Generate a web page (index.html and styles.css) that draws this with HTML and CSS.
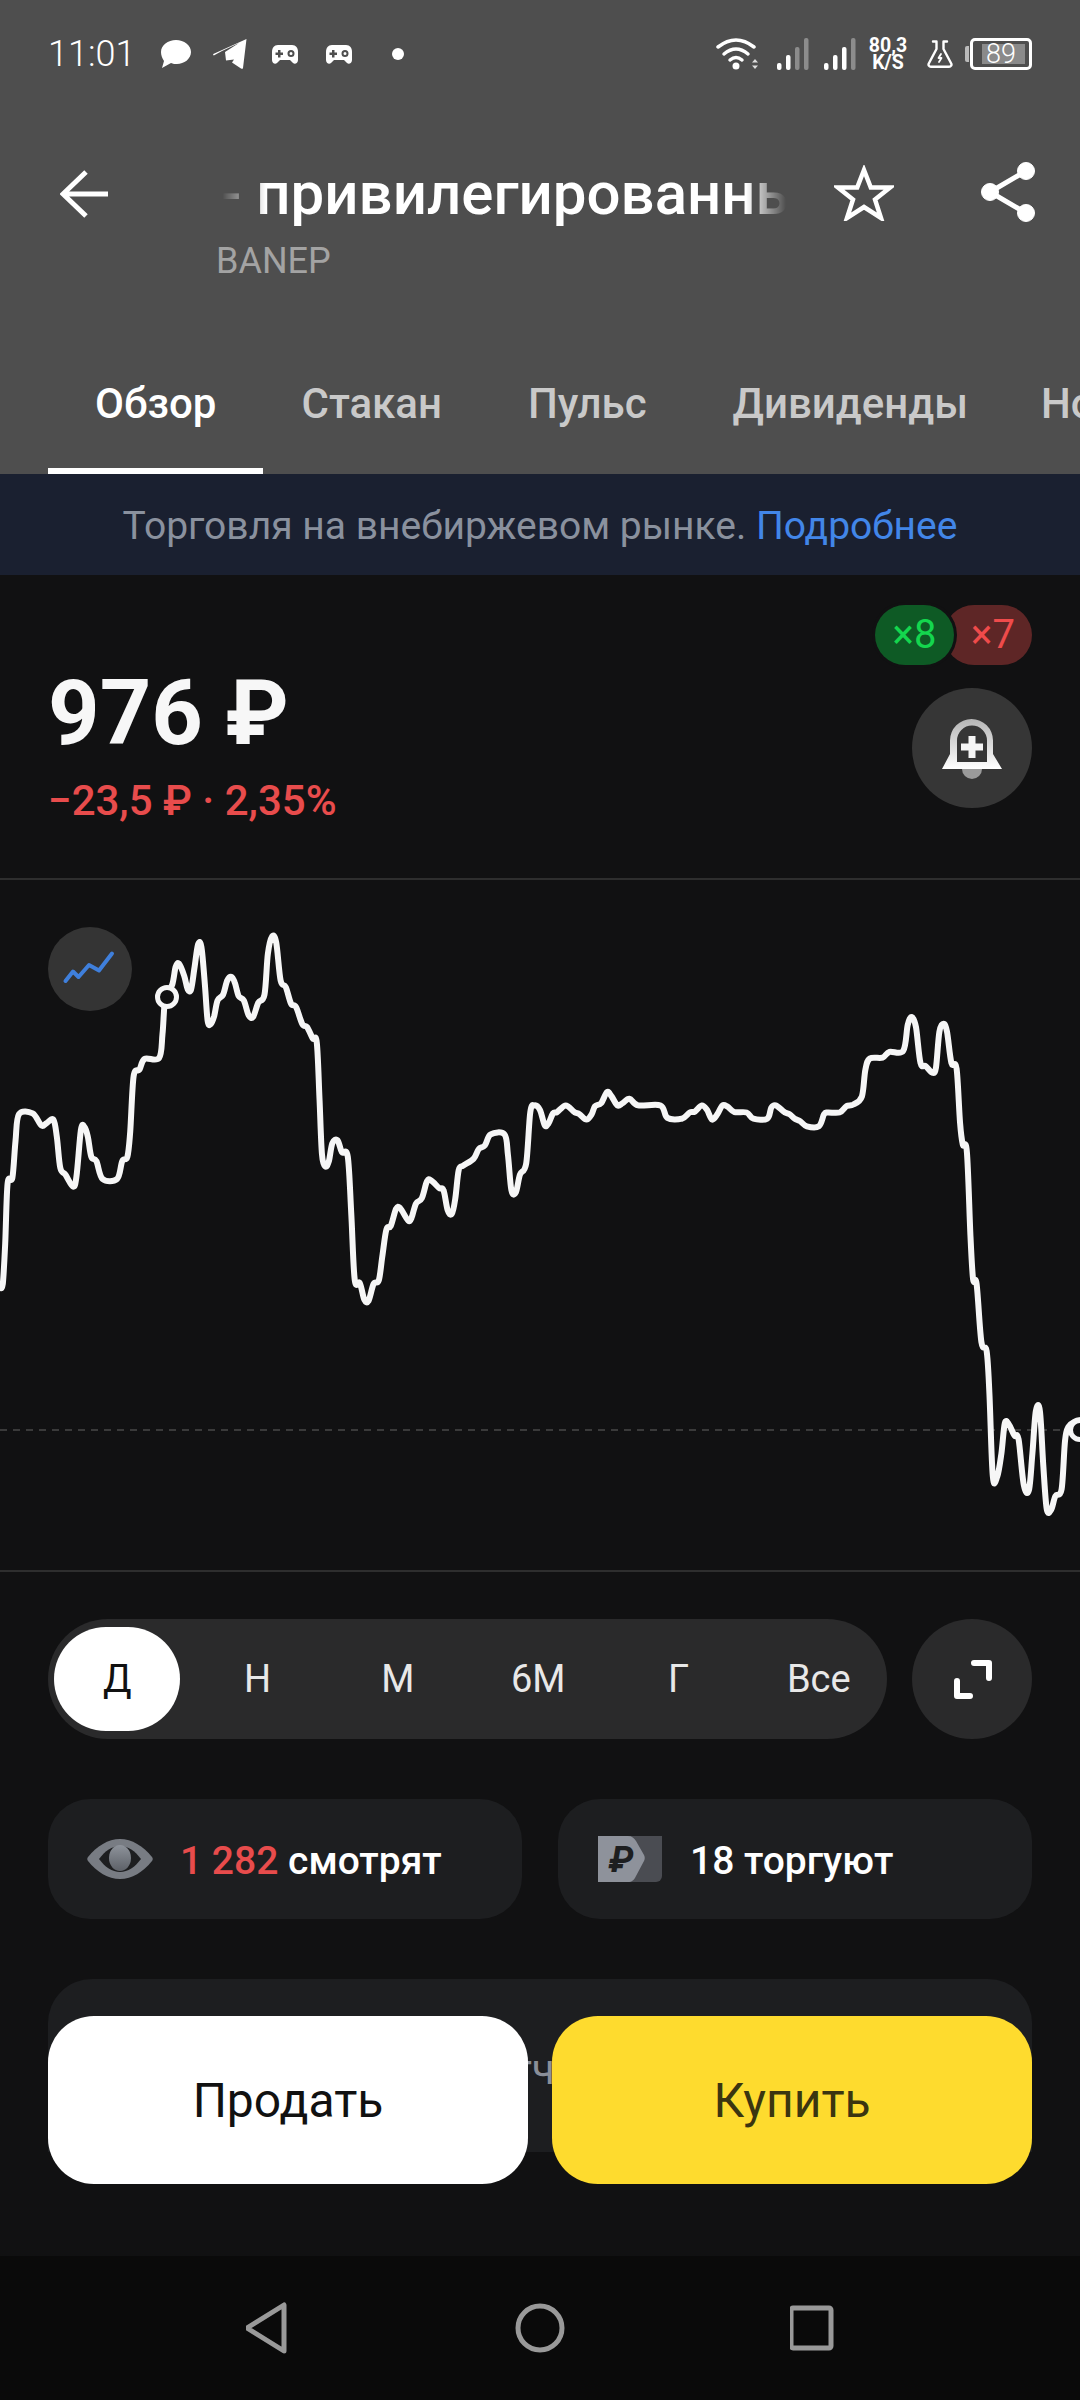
FILE: index.html
```html
<!DOCTYPE html>
<html lang="ru">
<head>
  <meta charset="UTF-8" />
  <meta name="viewport" content="width=device-width, initial-scale=1.0"/>
  <title>BANEP</title>
  <link rel="stylesheet" href="styles.css">
</head>
<body>
<div class="page">

  <header class="top">
    <div class="status">
      <div class="status-left">
        <span class="time">11:01</span>
        <svg class="ic-chat" width="30" height="28" viewBox="0 0 30 28"><path fill="#fff" d="M15 0c8 0 15 5 15 12s-7 12-14 12c-2 0-4 0-6-1l-9 5 2-7C1 18 0 15 0 12 0 5 7 0 15 0z"/></svg>
        <svg class="ic-tele" width="34" height="30" viewBox="0 0 34 30"><path fill="#fff" d="M33.5 0 30 29c-.2 1-1 1-2 .6l-9-6 2-3-8 1L12 13 26 4 9 12 .8 16.500c-.8-.6-1-1.200 0-1.700z"/></svg>
        <svg class="ic-pad" width="26" height="19" viewBox="0 0 26 19"><use href="#gamepad"/></svg>
        <svg class="ic-pad2" width="26" height="19" viewBox="0 0 26 19"><use href="#gamepad"/></svg>
        <span class="status-dot"></span>
      </div>
      <div class="status-right">
        <svg class="ic-wifi" width="44" height="36" viewBox="0 0 44 36" fill="none" stroke="#fff" stroke-width="3.5" stroke-linecap="round">
          <path d="M2 11Q20-3 38 11"/><path d="M8 18Q20 8 32 18"/><path d="M14 24Q20 19 26 24"/>
          <circle cx="20" cy="30" r="3.500" fill="#fff" stroke="none"/>
          <path d="M39 23l3 3.500h-6zM39 33l3-3.500h-6z" fill="#ddd" stroke="none"/>
        </svg>
        <svg class="ic-signal" width="32" height="32" viewBox="0 0 32 32">
          <rect x="0" y="25" width="4.500" height="7" rx="2" fill="#fff"/><rect x="9" y="17" width="4.500" height="15" rx="2" fill="#fff"/>
          <rect x="18" y="9" width="4.500" height="23" rx="2" fill="#8c8c8c"/><rect x="27" y="0" width="4.500" height="32" rx="2" fill="#8c8c8c"/>
        </svg>
        <svg class="ic-signal2" width="32" height="32" viewBox="0 0 32 32">
          <rect x="0" y="25" width="4.500" height="7" rx="2" fill="#fff"/><rect x="9" y="17" width="4.500" height="15" rx="2" fill="#fff"/>
          <rect x="18" y="9" width="4.500" height="23" rx="2" fill="#fff"/><rect x="27" y="0" width="4.500" height="32" rx="2" fill="#8c8c8c"/>
        </svg>
        <div class="speed">80,3<br>K/S</div>
        <svg class="ic-flask" width="26" height="28" viewBox="0 0 26 28" fill="none" stroke="#fff" stroke-width="2.400" stroke-linejoin="round" stroke-linecap="round">
          <path d="M6 1.500h3.500V9L1.800 23.500C1 25 2 26.800 4 26.800h18c2 0 3-1.800 2.200-3.300L16.500 9V1.500H20"/>
          <path d="M14 14l-2.500 4h3l-2.500 4" stroke-width="1.800"/>
        </svg>
        <div class="battery-tip"></div>
        <div class="battery"><span class="battery-level">89</span></div>
      </div>
    </div>

    <div class="titlebar">
      <svg class="ic-back" width="48" height="48" viewBox="0 0 48 48" fill="none" stroke="#fff" stroke-width="5"><path d="M48 24H3M26 2 3 24l23 22"/></svg>
      <div class="title-wrap">
        <div class="title">- привилегированные акции</div>
        <div class="ticker">BANEP</div>
      </div>
      <svg class="ic-star" width="60" height="56" viewBox="0 0 60 56" fill="none" stroke="#fff" stroke-width="4.500"><path d="M30 5l6.800 17.500H56L41 34.500 47 53 30 42 13 53l6-18.500L4 22.500h19.200z"/></svg>
      <svg class="ic-share" width="56" height="62" viewBox="0 0 56 62" fill="#fff" stroke="#fff"><path d="M45 10 9 31l36 21" fill="none" stroke-width="5"/><circle cx="45" cy="10" r="8.500"/><circle cx="9" cy="31" r="8.500"/><circle cx="45" cy="52" r="8.500"/></svg>
    </div>

    <nav class="tabs">
      <div class="tab tab-active">Обзор</div>
      <div class="tab">Стакан</div>
      <div class="tab">Пульс</div>
      <div class="tab">Дивиденды</div>
      <div class="tab tab-last">Новости</div>
    </nav>
  </header>

  <div class="banner">Торговля на внебиржевом рынке. <span class="banner-link">Подробнее</span></div>

  <section class="price-row">
    <div class="price-info">
      <div class="price">976 ₽</div>
      <div class="change">−23,5 ₽ · 2,35%</div>
    </div>
    <div class="price-side">
      <div class="badges">
        <span class="badge badge-green">×8</span>
        <span class="badge badge-red">×7</span>
      </div>
      <button class="round-btn bell-btn">
        <svg width="120" height="120" viewBox="0 0 120 120">
          <defs><linearGradient id="bellGrad" x1="0" y1="0" x2="0" y2="1"><stop offset="0" stop-color="#b5b5b5"/><stop offset="1" stop-color="#fff"/></linearGradient></defs>
          <path d="M50 81a10 10 0 0 0 20 0z" fill="#9a9a9a"/>
          <path fill="url(#bellGrad)" fill-rule="evenodd" d="M30 81l8-15V52.500a21.500 21.500 0 0 1 43 0V66l9 15zM45 74h30V52.500a15 15 0 0 0-30 0z"/>
          <path fill="#f5f5f5" d="M56.500 48h7v7.500H71v7h-7.500V70h-7v-7.500H49v-7h7.500z"/>
        </svg>
      </button>
    </div>
  </section>

  <section class="chart">
    <div class="chart-mode">
      <svg width="84" height="84" viewBox="0 0 84 84" fill="none" stroke="#3f7fdb" stroke-width="4" stroke-linecap="round" stroke-linejoin="round"><path d="M17.500 54 25 44.500l5.500 5.500 10.500-12 10 5.500L64 26.500"/></svg>
    </div>
    <svg class="chart-svg" width="1080" height="690" viewBox="0 0 1080 690">
      <line class="chart-base" x1="0" y1="550" x2="1080" y2="550"/>
      <path id="chartLine" class="chart-line"/>
      <circle class="chart-dot" cx="167" cy="117" r="9.500"/>
      <circle class="chart-dot" cx="1080" cy="550" r="9.500"/>
    </svg>
  </section>

  <section class="periods">
    <div class="period-pill">
      <div class="period period-active">Д</div>
      <div class="period">Н</div>
      <div class="period">М</div>
      <div class="period">6М</div>
      <div class="period">Г</div>
      <div class="period">Все</div>
    </div>
    <button class="round-btn expand-btn">
      <svg width="120" height="120" viewBox="0 0 120 120" fill="none" stroke="#fff" stroke-width="6" stroke-linejoin="round" stroke-linecap="round"><path d="M62 44h15v15M58 77H45V62"/></svg>
    </button>
  </section>

  <section class="stats">
    <div class="stat stat-watch">
      <svg width="66" height="40" viewBox="0 0 66 40">
        <defs><linearGradient id="irisGrad" x1="0" y1="0" x2="0" y2="1"><stop offset="0" stop-color="#8e939b"/><stop offset="1" stop-color="#5d6168"/></linearGradient></defs>
        <path fill="#787c83" d="M1 18C10 7 21 0 33 0s23 7 32 18c1 1.300 1 2.700 0 4-9 11-20 18-32 18S10 33 1 22c-1-1.300-1-2.700 0-4z"/>
        <path fill="#1d1e20" d="M12 20c6-8 13-13 21-13s15 5 21 13c-6 8-13 13-21 13s-15-5-21-13z"/>
        <ellipse cx="33" cy="19" rx="11" ry="13" fill="url(#irisGrad)"/>
      </svg>
      <span class="stat-text"><span class="stat-red">1 282</span> смотрят</span>
    </div>
    <div class="stat stat-trade">
      <svg width="64" height="46" viewBox="0 0 64 46">
        <path fill="#4a4c52" d="M20 0h44v40a6 6 0 0 1-6 6H20z"/>
        <path fill="#8e929b" d="M0 0h30c4 0 6 2 8 5l8 14c1 2 1 4 0 6l-8 15c-2 4-4 6-8 6H0z"/>
        <text class="rub-mark" x="23" y="36">₽</text>
      </svg>
      <span class="stat-text">18 торгуют</span>
    </div>
  </section>

  <section class="info-card"><span class="info-text">Отчёт</span></section>

  <div class="footer-space"></div>

  <div class="trade-buttons">
    <button class="trade-btn trade-sell">Продать</button>
    <button class="trade-btn trade-buy">Купить</button>
  </div>

  <nav class="navbar">
    <svg width="44" height="52" viewBox="0 0 44 52" fill="none" stroke="#999" stroke-width="5" stroke-linejoin="round"><path d="M38 3v46L1 26z"/></svg>
    <svg width="52" height="52" viewBox="0 0 52 52" fill="none" stroke="#999" stroke-width="5"><circle cx="26" cy="26" r="22"/></svg>
    <svg width="46" height="46" viewBox="0 0 46 46" fill="none" stroke="#999" stroke-width="5" stroke-linejoin="round"><rect x="1" y="3" width="40" height="40" rx="2"/></svg>
  </nav>

</div>

<svg width="0" height="0" class="defs">
  <symbol id="gamepad" viewBox="0 0 26 19">
    <path fill="#fff" fill-rule="evenodd" d="M6 0h14c4 0 6 3 6 7v8c0 3-3 5-5 3l-3-3H8l-3 3c-2 2-5 0-5-3V7c0-4 2-7 6-7zM6 5v2.500H3.500v2.500H6v2.500h2.500V10H11V7.500H8.500V5zM19 5a3.500 3.500 0 1 0 0 7 3.500 3.500 0 0 0 0-7zm0 2a1.500 1.500 0 1 1 0 3 1.500 1.500 0 0 1 0-3z"/>
  </symbol>
</svg>

<script src="chart.js"></script>
</body>
</html>
```

FILE: styles.css
```css
* {
  box-sizing: border-box;
}

body {
  margin: 0;
  font-family: Roboto, "Noto Sans", sans-serif;
  background: #111112;
  color: #fff;
}

button {
  font-family: inherit;
  border: none;
  padding: 0;
}

.defs {
  position: absolute;
}

.page {
  position: relative;
  display: flex;
  flex-direction: column;
  width: 1080px;
  height: 2400px;
  overflow: hidden;
}

/* header */
.top {
  height: 474px;
  background: #4e4e4e;
  display: flex;
  flex-direction: column;
}

.status {
  height: 108px;
  padding: 0 48px;
  display: flex;
  justify-content: space-between;
  align-items: center;
}

.status-left, .status-right {
  display: flex;
  align-items: center;
}

.time {
  font-size: 36px;
  font-weight: 300;
  width: 82px;
  white-space: nowrap;
}

.ic-chat { margin-left: 31px; }
.ic-tele { margin-left: 22px; }
.ic-pad { margin-left: 25px; }
.ic-pad2 { margin-left: 28px; }

.status-dot {
  width: 12px;
  height: 12px;
  margin-left: 40px;
  border-radius: 50%;
  background: #fff;
}

.ic-signal { margin-left: 17px; }
.ic-signal2 { margin-left: 15px; }

.speed {
  width: 40px;
  margin-left: 12px;
  font-size: 19.5px;
  font-weight: 700;
  line-height: 17px;
  text-align: center;
}

.ic-flask { margin-left: 19px; }

.battery-tip {
  width: 4px;
  height: 16px;
  margin-left: 12px;
  margin-right: 1px;
  border-radius: 2px 0 0 2px;
  background: #bbb;
}

.battery {
  width: 62px;
  height: 32px;
  padding: 3px 4px 3px 9px;
  border: 3px solid #fff;
  border-radius: 5px;
}

.battery-level {
  display: block;
  height: 20px;
  padding-left: 4px;
  background: #8a8a8a;
  font-size: 27px;
  font-weight: 300;
  line-height: 20px;
}

.titlebar {
  display: flex;
  align-items: flex-start;
  padding: 62px 0 0 60px;
}

.ic-back {
  flex: none;
}

.title-wrap {
  width: 570px;
  margin-left: 108px;
  margin-top: -10px;
}

.title {
  overflow: hidden;
  padding-left: 5px;
  font-size: 60px;
  font-weight: 500;
  line-height: 68px;
  white-space: nowrap;
  -webkit-mask-image: linear-gradient(90deg, transparent 6px, #000 50px, #000 530px, transparent 570px);
  mask-image: linear-gradient(90deg, transparent 6px, #000 50px, #000 530px, transparent 570px);
}

.ticker {
  margin-top: 13px;
  color: #a3a3a3;
  font-size: 36px;
  line-height: 40px;
}

.ic-star {
  flex: none;
  margin-left: 48px;
  margin-top: -5px;
}

.ic-share {
  flex: none;
  margin-left: 87px;
  margin-top: -9px;
}

.tabs {
  margin-top: auto;
  padding-left: 48px;
  display: flex;
}

.tab {
  flex: none;
  padding: 0 43px 40px;
  border-bottom: 6px solid transparent;
  color: #c9c9c9;
  font-size: 42px;
  font-weight: 500;
  line-height: 48px;
}

.tab-active {
  padding: 0 47px 40px;
  margin-right: -5px;
  border-bottom-color: #fff;
  color: #fff;
}

.tab-last {
  padding-left: 30px;
}

.banner {
  height: 101px;
  background: #1a2030;
  color: #8a919e;
  font-size: 39px;
  line-height: 105px;
  text-align: center;
  white-space: nowrap;
}

.banner-link {
  color: #4286e8;
}

/* price */
.price-row {
  height: 305px;
  padding: 30px 48px 0;
  border-bottom: 2px solid #2e2e2e;
  display: flex;
  justify-content: space-between;
}

.price-info {
  padding-top: 57px;
}

.price {
  color: #f7f7f7;
  font-size: 90px;
  font-weight: 700;
  line-height: 104px;
}

.change {
  margin-top: 13px;
  color: #e84c4c;
  font-size: 42px;
  font-weight: 500;
  line-height: 44px;
}

.price-side {
  display: flex;
  flex-direction: column;
  align-items: flex-end;
  gap: 23px;
}

.badges {
  display: flex;
}

.badge {
  height: 60px;
  border-radius: 30px;
  font-size: 40px;
  line-height: 60px;
  text-align: center;
}

.badge-green {
  position: relative;
  width: 79px;
  background: #0e5a25;
  box-shadow: 0 0 0 3px #111112;
  color: #14d64e;
}

.badge-red {
  width: 88px;
  margin-left: -10px;
  padding-left: 10px;
  background: #5e2626;
  color: #ef4b4b;
}

.round-btn {
  display: block;
  width: 120px;
  height: 120px;
  border-radius: 50%;
  flex: none;
}

.bell-btn {
  background: #363636;
}

/* chart */
.chart {
  position: relative;
  height: 692px;
  border-bottom: 2px solid #2e2e2e;
}

.chart-mode {
  position: absolute;
  left: 48px;
  top: 47px;
  width: 84px;
  height: 84px;
  border-radius: 50%;
  background: #343434;
}

.chart-svg {
  display: block;
}

.chart-base {
  stroke: #3a3a3a;
  stroke-width: 2;
  stroke-dasharray: 7 6;
}

.chart-line {
  fill: none;
  stroke: #f6f6f6;
  stroke-width: 6;
  stroke-linejoin: round;
  stroke-linecap: round;
}

.chart-dot {
  fill: #111112;
  stroke: #f6f6f6;
  stroke-width: 5;
}

/* period selector */
.periods {
  margin-top: 47px;
  padding: 0 48px;
  display: flex;
  justify-content: space-between;
}

.period-pill {
  width: 839px;
  height: 120px;
  padding: 8px 5px 8px 6px;
  border-radius: 60px;
  background: #2a2a2b;
  display: flex;
  gap: 14px;
}

.period {
  flex: 1;
  border-radius: 52px;
  color: #e8e8e8;
  font-size: 38px;
  line-height: 104px;
  text-align: center;
}

.period-active {
  background: #fff;
  color: #111;
}

.expand-btn {
  background: #2a2a2b;
}

/* watchers */
.stats {
  margin-top: 60px;
  padding: 0 48px;
  display: flex;
  justify-content: space-between;
}

.stat {
  width: 474px;
  height: 120px;
  border-radius: 42px;
  background: #1d1e20;
  display: flex;
  align-items: center;
  font-size: 39px;
  font-weight: 500;
}

.stat-watch {
  padding-left: 39px;
  gap: 27px;
}

.stat-trade {
  padding-left: 40px;
  gap: 28px;
}

.stat-text {
  padding-top: 4px;
}

.stat-red {
  color: #e84c4c;
}

.rub-mark {
  fill: #1d1e20;
  font-size: 36px;
  font-weight: 700;
  font-style: italic;
  text-anchor: middle;
}

/* card under the trade buttons */
.info-card {
  height: 173px;
  margin: 60px 48px 0;
  padding-top: 67px;
  border-radius: 44px 44px 0 0;
  background: #1d1e20;
  color: #8a8f98;
  font-size: 42px;
  line-height: 48px;
  text-align: center;
}

.footer-space {
  flex: 1;
}

.trade-buttons {
  position: absolute;
  left: 48px;
  right: 48px;
  top: 2016px;
  display: flex;
  justify-content: space-between;
}

.trade-btn {
  width: 480px;
  height: 168px;
  border-radius: 46px;
  font-size: 48px;
}

.trade-sell {
  background: #fff;
  color: #111;
}

.trade-buy {
  background: #fedb2e;
  color: #3b3510;
}

.navbar {
  height: 144px;
  padding: 0 244px 0 246px;
  background: #0a0a0a;
  display: flex;
  justify-content: space-between;
  align-items: center;
}
```

FILE: chart.js
```js
// traced from the price line: x, y in a 3136 x 1568 grid over the 1080 x 700 plot
const left = [0,868, 8,860, 15,770, 22,635, 36,622, 45,540, 55,480, 95,478, 120,505, 135,500, 155,492, 165,530, 175,600, 190,615, 212,642, 222,620, 235,515, 245,508, 255,530, 265,575, 280,585, 298,625, 340,625, 355,585, 370,575, 378,520, 388,395, 405,380, 420,356, 462,354, 472,300, 480,220, 500,190, 510,150, 520,143, 535,170, 545,200, 555,200, 565,150, 575,100, 585,105, 595,190, 603,270, 612,278, 622,260, 632,225, 648,212, 660,180, 672,172, 682,185, 693,215, 708,225, 722,258, 735,262, 750,230, 768,212, 778,120, 790,82, 802,95, 815,180, 830,195, 845,232, 860,240, 878,278, 892,285, 908,310, 920,320, 928,450, 935,570, 945,597, 955,585, 965,545, 980,538, 993,565, 1010,575, 1020,700, 1030,850, 1045,858, 1058,895, 1070,898, 1085,860, 1100,852, 1110,800, 1122,738, 1135,730, 1150,692, 1162,690, 1185,718, 1195,712, 1208,680, 1225,668, 1240,630, 1252,628, 1275,645, 1288,650, 1300,695, 1312,703, 1322,670, 1332,605, 1345,595, 1375,580, 1390,558, 1408,550, 1425,525, 1465,525, 1475,570, 1485,650, 1498,655, 1510,615, 1528,590, 1540,475, 1552,460];
const right = [0,470, 14,505, 25,500, 38,478, 50,475, 75,460, 100,475, 115,480, 135,492, 150,480, 160,462, 178,455, 195,430, 208,440, 225,460, 240,455, 260,445, 285,460, 350,460, 370,488, 412,490, 435,476, 450,474, 470,460, 485,470, 500,492, 515,480, 530,460, 545,463, 565,475, 600,476, 620,490, 660,490, 672,465, 685,460, 710,475, 725,480, 740,490, 755,495, 775,507, 810,507, 825,480, 835,476, 870,476, 890,462, 910,458, 935,440, 945,380, 958,355, 995,353, 1015,340, 1055,338, 1068,280, 1080,262, 1092,285, 1105,365, 1120,372, 1140,387, 1150,375, 1160,295, 1172,277, 1182,295, 1195,365, 1210,378, 1220,500, 1228,548, 1240,565, 1250,750, 1258,850, 1268,860, 1282,990, 1297,1010, 1305,1100, 1315,1290, 1328,1292, 1340,1240, 1350,1172, 1362,1175, 1378,1200, 1390,1208, 1405,1310, 1420,1322, 1430,1240, 1440,1145, 1452,1145, 1462,1270, 1472,1365, 1485,1365, 1497,1335, 1515,1320, 1525,1210, 1535,1180, 1555,1168, 1568,1165];

const pts = [];
for (let i = 0; i < left.length; i += 2) {
  pts.push([left[i] / 2.904, left[i + 1] / 2.24 + 20]);
}
for (let i = 0; i < right.length; i += 2) {
  pts.push([(right[i] + 1568) / 2.904, right[i + 1] / 2.24 + 20]);
}

// catmull-rom, so the line stays round at the turns
let d = `M${pts[0][0]} ${pts[0][1]}`;
for (let i = 0; i < pts.length - 1; i++) {
  const p0 = pts[Math.max(i - 1, 0)];
  const p1 = pts[i];
  const p2 = pts[i + 1];
  const p3 = pts[Math.min(i + 2, pts.length - 1)];
  const c1x = p1[0] + (p2[0] - p0[0]) / 6;
  const c1y = p1[1] + (p2[1] - p0[1]) / 6;
  const c2x = p2[0] - (p3[0] - p1[0]) / 6;
  const c2y = p2[1] - (p3[1] - p1[1]) / 6;
  d += `C${c1x.toFixed(1)} ${c1y.toFixed(1)} ${c2x.toFixed(1)} ${c2y.toFixed(1)} ${p2[0].toFixed(1)} ${p2[1].toFixed(1)}`;
}
document.getElementById("chartLine").setAttribute("d", d);
```
